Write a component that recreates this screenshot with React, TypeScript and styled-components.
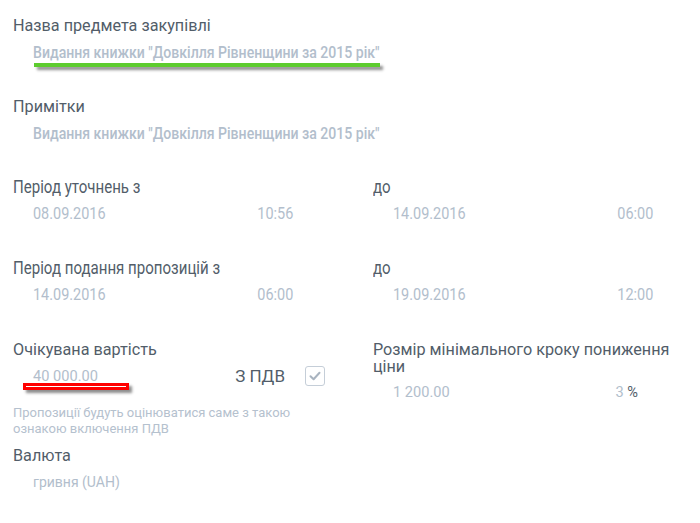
import React from "react";
import styled, { createGlobalStyle } from "styled-components";

const GlobalStyle = createGlobalStyle`
  html, body {
    margin: 0;
    padding: 0;
    background: #ffffff;
  }
  body {
    font-family: Roboto, "Noto Sans", sans-serif;
    width: 700px;
    height: 523px;
    overflow: hidden;
  }
`;

const Page = styled.div`
  padding: 17px 10px 0 13px;
`;

const Section = styled.section<{ $gap?: number }>`
  margin-bottom: ${(p) => p.$gap ?? 36}px;
`;

const Pair = styled.div<{ $gap?: number }>`
  display: grid;
  grid-template-columns: 360px 1fr;
  margin-bottom: ${(p) => p.$gap ?? 37}px;
`;

const Label = styled.div<{ $size?: number }>`
  font-size: ${(p) => p.$size ?? 16.2}px;
  line-height: 17px;
  color: #525d69;
`;

const Cond = styled.span<{ $scale?: number; $right?: boolean }>`
  display: inline-block;
  white-space: nowrap;
  transform: scaleX(${(p) => p.$scale ?? 0.85});
  transform-origin: ${(p) => (p.$right ? "right" : "left")} center;
`;

const Value = styled.div<{ $cond?: boolean }>`
  position: relative;
  margin-top: 8px;
  padding-left: 20px;
  font-size: ${(p) => (p.$cond ? 17 : 14.6)}px;
  font-weight: ${(p) => (p.$cond ? 500 : 400)};
  line-height: 20px;
  color: #b2becc;
`;

const SplitValue = styled(Value)`
  display: flex;
  justify-content: space-between;
  width: 260px;
  margin-top: 7px;
  font-weight: 400;
`;

const Mark = styled.span<{ $kind: "green" | "red" }>`
  position: absolute;
  left: ${(p) => (p.$kind === "green" ? 21 : 10)}px;
  top: ${(p) => (p.$kind === "green" ? 21 : 17)}px;
  width: ${(p) => (p.$kind === "green" ? 346 : 100)}px;
  height: ${(p) => (p.$kind === "green" ? 4 : 1)}px;
  background: ${(p) => (p.$kind === "green" ? "#5dcc2e" : "#ffffff")};
  border: ${(p) => (p.$kind === "green" ? "none" : "3px solid #ff0000")};
  box-shadow: 3px 3px 3px rgba(0, 0, 0, 0.45);
`;

const MoneyRow = styled(Value)`
  display: flex;
  align-items: center;
  width: 292px;
`;

const Amount = styled.span`
  flex: 1;
`;

const VatText = styled.span`
  font-size: 17px;
  color: #525d69;
`;

const CheckBox = styled.span`
  box-sizing: border-box;
  width: 20px;
  height: 20px;
  margin-left: 20px;
  border: 1.5px solid #c5ced8;
  border-radius: 3px;
  display: flex;
  align-items: center;
  justify-content: center;
`;

const StepRow = styled(Value)`
  display: flex;
  justify-content: space-between;
  width: 245px;
  margin-top: 7px;
`;

const Percent = styled.span`
  color: #525d69;
`;

const Hint = styled.div`
  margin-top: 19px;
  width: 290px;
  font-size: 13px;
  line-height: 16px;
  color: #b5c1ce;
`;

const Currency = styled(Value)`
  font-size: 14px;
`;

const Period = ({
  label,
  from,
  fromTime,
  to,
  toTime,
}: {
  label: string;
  from: string;
  fromTime: string;
  to: string;
  toTime: string;
}) => (
  <Pair>
    <div>
      <Label $size={17.5}>
        <Cond $scale={0.86}>{label}</Cond>
      </Label>
      <SplitValue $cond>
        <Cond>{from}</Cond>
        <Cond $right>{fromTime}</Cond>
      </SplitValue>
    </div>
    <div>
      <Label $size={17.5}>
        <Cond $scale={0.86}>до</Cond>
      </Label>
      <SplitValue $cond>
        <Cond>{to}</Cond>
        <Cond $right>{toTime}</Cond>
      </SplitValue>
    </div>
  </Pair>
);

export default function App() {
  const title = "Видання книжки \"Довкілля Рівненщини за 2015 рік\"";
  return (
    <>
      <GlobalStyle />
      <Page>
        <Section>
          <Label>Назва предмета закупівлі</Label>
          <Value $cond>
            <Cond $scale={0.828}>{title}</Cond>
            <Mark $kind="green" />
          </Value>
        </Section>
        <Section>
          <Label>Примітки</Label>
          <Value $cond>
            <Cond $scale={0.828}>{title}</Cond>
          </Value>
        </Section>
        <Period
          label="Період уточнень з"
          from="08.09.2016"
          fromTime="10:56"
          to="14.09.2016"
          toTime="06:00"
        />
        <Period
          label="Період подання пропозицій з"
          from="14.09.2016"
          fromTime="06:00"
          to="19.09.2016"
          toTime="12:00"
        />
        <Pair $gap={10}>
          <div>
            <Label>Очікувана вартість</Label>
            <MoneyRow>
              <Amount>40 000.00</Amount>
              <VatText>З ПДВ</VatText>
              <CheckBox>
                <svg width="14" height="14" viewBox="0 0 14 14">
                  <path
                    d="M2.5 7.2 L5.6 10.2 L11.5 3.8"
                    fill="none"
                    stroke="#a9b4c0"
                    strokeWidth="2"
                    strokeLinecap="round"
                    strokeLinejoin="round"
                  />
                </svg>
              </CheckBox>
              <Mark $kind="red" />
            </MoneyRow>
            <Hint>
              Пропозиції будуть оцінюватися саме з такою ознакою включення ПДВ
            </Hint>
          </div>
          <div>
            <Label>Розмір мінімального кроку пониження ціни</Label>
            <StepRow>
              <span>1 200.00</span>
              <span>
                3 <Percent>%</Percent>
              </span>
            </StepRow>
          </div>
        </Pair>
        <Section>
          <Label>Валюта</Label>
          <Currency>гривня (UAH)</Currency>
        </Section>
      </Page>
    </>
  );
}
